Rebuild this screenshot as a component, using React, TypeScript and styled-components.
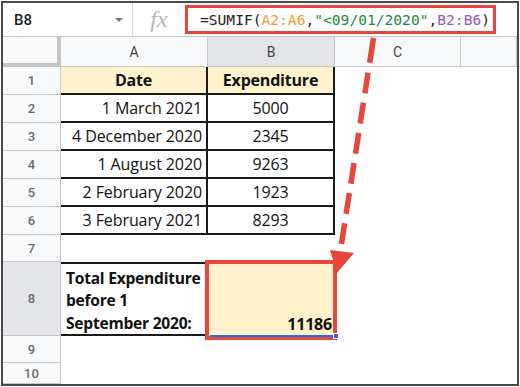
import styled, { createGlobalStyle, css } from 'styled-components'

const RED = '#e8453c'
const YELLOW = '#fff2cc'

const GlobalStyle = createGlobalStyle`
  html, body {
    margin: 0;
    padding: 0;
    background: #fff;
  }
  body {
    width: 520px;
    height: 387px;
    overflow: hidden;
    font-family: "Open Sans", "Liberation Sans", sans-serif;
  }
`;

const Frame = styled.div`
  position: relative;
  margin: 1px;
  width: 518px;
  height: 385px;
  box-sizing: border-box;
  border: 2px solid #4a4a4a;
  display: flex;
  flex-direction: column;
  background: #fff;
`;

const FormulaBar = styled.div`
  height: 34px;
  box-sizing: border-box;
  border-bottom: 1px solid #c7c7c7;
  display: flex;
  align-items: flex-start;
`;

const NameBox = styled.div`
  width: 130px;
  height: 100%;
  box-sizing: border-box;
  padding: 0 9px 0 11px;
  display: flex;
  align-items: center;
  justify-content: space-between;
  border-right: 1px solid #dadce0;
`;

const NameText = styled.span`
  font-family: Roboto, "Liberation Sans", sans-serif;
  font-weight: 500;
  font-size: 15px;
  color: #222;
`;

const Caret = styled.span`
  width: 0;
  height: 0;
  border-left: 4px solid transparent;
  border-right: 4px solid transparent;
  border-top: 4px solid #777;
`;

const FxBox = styled.div`
  width: 52px;
  height: 100%;
  display: flex;
  align-items: center;
  justify-content: center;
  font-family: "Liberation Serif", serif;
  font-style: italic;
  font-size: 24px;
  color: #b8b8b8;
`;

const FormulaInput = styled.div`
  margin-top: 2px;
  width: 311px;
  height: 29px;
  box-sizing: border-box;
  border: 3px solid ${RED};
  padding-left: 12px;
  display: flex;
  align-items: center;
  font-family: "DejaVu Sans Mono", "Liberation Mono", monospace;
  font-size: 14.6px;
  color: #222;
  white-space: pre;
`;

const Token = styled.span<{ $color: string }>`
  color: ${(p) => p.$color};
`;

const Sheet = styled.div`
  flex: 1;
  display: grid;
  grid-template-columns: 58px 147px 127px 126px 1fr;
  grid-template-rows: 30px repeat(6, 28px) 27px 74px 27px 1fr;
`;

const Corner = styled.div`
  background: #f8f9fa;
  border-right: 4px solid #c4c4c4;
  border-bottom: 4px solid #c4c4c4;
`;

const ColHeader = styled.div<{ $active?: boolean }>`
  background: ${(p) => (p.$active ? '#e3e5e8' : '#f8f9fa')};
  border-right: 1px solid #c7c7c7;
  border-bottom: 1px solid #c7c7c7;
  display: flex;
  align-items: center;
  justify-content: center;
  font-family: Roboto, "Liberation Sans", sans-serif;
  font-size: 14px;
  color: #444;
`;

const RowHeader = styled.div<{ $active?: boolean }>`
  background: ${(p) => (p.$active ? '#e3e5e8' : '#f8f9fa')};
  border-right: 1px solid #c7c7c7;
  border-bottom: 1px solid #c7c7c7;
  display: flex;
  align-items: center;
  justify-content: center;
  font-family: Roboto, "Liberation Sans", sans-serif;
  font-weight: 500;
  font-size: 13px;
  color: #6a6a6a;
`;

type CellProps = {
  $align?: 'flex-start' | 'center' | 'flex-end'
  $valign?: 'center' | 'flex-end'
  $bold?: boolean
  $fill?: string
  $top?: boolean
  $right?: boolean
  $bottom?: boolean
}

const Cell = styled.div<CellProps>`
  position: relative;
  box-sizing: border-box;
  padding: 0 4px;
  display: flex;
  align-items: ${(p) => p.$valign || 'center'};
  justify-content: ${(p) => p.$align || 'flex-start'};
  background: ${(p) => p.$fill || '#fff'};
  font-size: 16px;
  font-weight: ${(p) => (p.$bold ? 700 : 400)};
  letter-spacing: ${(p) => (p.$bold ? '-0.2px' : '-0.1px')};
  color: #111;
  white-space: nowrap;
  border-top: ${(p) => (p.$top ? '2px solid #1a1a1a' : 'none')};
  border-right: ${(p) => (p.$right ? '2px solid #1a1a1a' : 'none')};
  border-bottom: ${(p) => (p.$bottom ? '2px solid #1a1a1a' : 'none')};
`;

const LabelCell = styled(Cell)`
  padding: 0 0 0 5px;
`;

const WrapText = styled.div`
  white-space: normal;
  font-size: 15.6px;
  letter-spacing: -0.25px;
  line-height: 22.5px;
`;

const selectedCss = css`
  &::after {
    content: '';
    position: absolute;
    top: -2px;
    left: -3px;
    right: -2px;
    bottom: -4px;
    border: 4px solid ${RED};
    z-index: 1;
  }
  &::before {
    content: '';
    position: absolute;
    left: 2px;
    right: -1px;
    bottom: -1px;
    height: 2px;
    background: #1a73e8;
    z-index: 2;
  }
`;

const ResultCell = styled(Cell)`
  padding: 0 3px 1px 4px;
  ${selectedCss}
`;

const Handle = styled.span`
  position: absolute;
  right: -4px;
  bottom: -3px;
  width: 4px;
  height: 4px;
  background: #1a73e8;
  border: 1px solid #fff;
  z-index: 3;
`;

const ArrowLayer = styled.svg`
  position: absolute;
  top: -3px;
  left: -3px;
  width: 520px;
  height: 387px;
  pointer-events: none;
  z-index: 5;
`;

const rows = [
  ['1 March 2021', '5000'],
  ['4 December 2020', '2345'],
  ['1 August 2020', '9263'],
  ['2 February 2020', '1923'],
  ['3 February 2021', '8293'],
]

function Empty({ n }: { n: number }) {
  return (
    <>
      {Array.from({ length: n }).map((_, i) => (
        <Cell key={i} />
      ))}
    </>
  )
}

export default function App() {
  return (
    <>
      <GlobalStyle />
      <Frame>
        <FormulaBar>
          <NameBox>
            <NameText>B8</NameText>
            <Caret />
          </NameBox>
          <FxBox>fx</FxBox>
          <FormulaInput>
            =SUMIF(<Token $color="#ee9a2f">A2:A6</Token>,
            <Token $color="#1e8a3e">"&lt;09/01/2020"</Token>,
            <Token $color="#9b59b6">B2:B6</Token>)
          </FormulaInput>
        </FormulaBar>

        <Sheet>
          <Corner />
          <ColHeader>A</ColHeader>
          <ColHeader $active>B</ColHeader>
          <ColHeader>C</ColHeader>
          <ColHeader />

          <RowHeader>1</RowHeader>
          <Cell $align="center" $bold $fill={YELLOW} $right $bottom>Date</Cell>
          <Cell $align="center" $bold $fill={YELLOW} $right $bottom>Expenditure</Cell>
          <Empty n={2} />

          {rows.map(([date, amount], i) => (
            <>
              <RowHeader key={'h' + i}>{i + 2}</RowHeader>
              <Cell key={'a' + i} $align="flex-end" $right $bottom>{date}</Cell>
              <Cell key={'b' + i} $align="center" $right $bottom>{amount}</Cell>
              <Cell key={'c' + i} />
              <Cell key={'d' + i} />
            </>
          ))}

          <RowHeader>7</RowHeader>
          <Empty n={4} />

          <RowHeader $active>8</RowHeader>
          <LabelCell $bold $valign="flex-end" $top $bottom>
            <WrapText>Total Expenditure before 1 September 2020:</WrapText>
          </LabelCell>
          <ResultCell $bold $valign="flex-end" $align="flex-end" $fill={YELLOW}>
            11186
            <Handle />
          </ResultCell>
          <Empty n={2} />

          <RowHeader>9</RowHeader>
          <Empty n={4} />

          <RowHeader>10</RowHeader>
          <Empty n={4} />
        </Sheet>

        <ArrowLayer viewBox="0 0 520 387">
          <path
            d="M373.5 38 L340.8 248"
            stroke={RED}
            strokeWidth="5.5"
            fill="none"
            strokeDasharray="25 10 21 9.5 21 9.5 21 9.5 21 9.5 21 9.5 21 9.5"
          />
          <polygon points="330,250 354,253 337,273" fill={RED} />
        </ArrowLayer>
      </Frame>
    </>
  )
}
